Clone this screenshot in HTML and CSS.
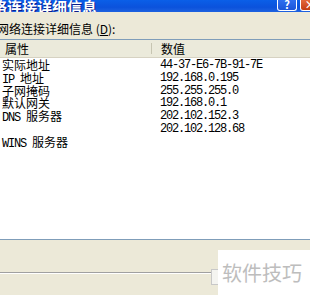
FILE: index.html
```html
<!DOCTYPE html>
<html lang="zh-CN">
<head>
    <meta charset="UTF-8">
    <title>网络连接详细信息</title>
    <link rel="stylesheet" href="styles.css">
</head>
<body>
    <div class="window">
        <div class="titlebar">
            <span class="title">网络连接详细信息</span>
            <div class="buttons">
                <span class="btn help">?</span>
                <span class="btn close">×</span>
            </div>
        </div>

        <div class="caption">网络连接详细信息 (<u>D</u>):</div>

        <div class="listview">
            <div class="header">
                <div class="col name">属性</div>
                <div class="col value">数值</div>
            </div>
            <div class="rows">
                <div class="row"><span class="name">实际地址</span><span class="value">44-37-E6-7B-91-7E</span></div>
                <div class="row"><span class="name"><span class="latin">IP </span>地址</span><span class="value">192.168.0.195</span></div>
                <div class="row"><span class="name">子网掩码</span><span class="value">255.255.255.0</span></div>
                <div class="row"><span class="name">默认网关</span><span class="value">192.168.0.1</span></div>
                <div class="row"><span class="name"><span class="latin">DNS </span>服务器</span><span class="value">202.102.152.3</span></div>
                <div class="row"><span class="name"></span><span class="value">202.102.128.68</span></div>
                <div class="row"><span class="name"><span class="latin">WINS </span>服务器</span><span class="value"></span></div>
            </div>
        </div>

        <div class="panel"></div>
        <div class="footer"></div>
    </div>

    <div class="watermark">
        <span class="mark-icon"></span>
        <span class="mark-text">软件技巧</span>
    </div>
</body>
</html>
```

FILE: styles.css
```css
body {
    margin: 0;
    width: 310px;
    height: 295px;
    overflow: hidden;
    background: #ece9d8;
    font-family: "Noto Sans CJK SC", "Liberation Sans", sans-serif;
    font-size: 12px;
    color: #000;
}
.window {
    display: flex;
    flex-direction: column;
    height: 295px;
}
.titlebar {
    height: 12px;
    background: linear-gradient(#0a5fe8, #0b52dc 60%, #1e62e0);
    display: flex;
    justify-content: space-between;
    align-items: flex-end;
    overflow: hidden;
}
.title {
    color: #fff;
    font-weight: bold;
    font-size: 15px;
    line-height: 15px;
    margin-left: -23px;
    margin-bottom: -2px;
    text-shadow: 1px 1px #0a1e8a;
}
.buttons {
    display: flex;
    gap: 3px;
    align-self: flex-start;
    margin-right: -10px;
}
.btn {
    width: 18px;
    height: 10px;
    border: 1px solid #fff;
    border-top: none;
    border-radius: 0 0 3px 3px;
    color: #fff;
    font-weight: bold;
    font-size: 11px;
    line-height: 8px;
    text-align: center;
}
.help {
    background: linear-gradient(#2f6ff0, #1b55d8);
}
.close {
    background: linear-gradient(#e4683c, #c43d14);
}
.caption {
    margin-left: -3px;
    margin-top: 8px;
    height: 19px;
    line-height: 18px;
}
.caption u {
    text-decoration: underline;
}
.listview {
    height: 199px;
    background: #fff;
    border-top: 1px solid #7f9db9;
    border-bottom: 1px solid #7f9db9;
    display: flex;
    flex-direction: column;
}
.header {
    height: 17px;
    display: flex;
    background: #ebeadb;
    border-bottom: 1px solid #d6d2c2;
}
.header .col {
    line-height: 17px;
    box-sizing: border-box;
}
.header .name {
    width: 152px;
    padding-left: 5px;
    border-right: 1px solid #c7c5b2;
    margin: 3px 0;
    line-height: 11px;
}
.header .value {
    padding-left: 9px;
}
.rows {
    padding-top: 1px;
}
.row {
    display: flex;
    height: 12.8px;
    line-height: 12.8px;
}
.row .name {
    width: 160px;
    padding-left: 2px;
    box-sizing: border-box;
}
.latin,
.row .value {
    font-family: "Liberation Mono", monospace;
    font-size: 12px;
    letter-spacing: -1.2px;
}
.panel {
    height: 32px;
    border-bottom: 1px solid #a0a0a0;
}
.footer {
    flex: 1;
    border-top: 1px solid #fff;
}
.watermark {
    position: absolute;
    left: 211px;
    top: 250px;
    display: flex;
    align-items: center;
}
.mark-icon {
    width: 6px;
    height: 14px;
    border: 1px solid #c8c8c8;
    border-right: none;
    background: #f4f4f0;
    margin-top: 8px;
}
.mark-text {
    width: 93px;
    height: 45px;
    background: #fff;
    color: #bdbdbd;
    font-size: 20px;
    line-height: 45px;
    padding-left: 4px;
    box-sizing: border-box;
}
```
